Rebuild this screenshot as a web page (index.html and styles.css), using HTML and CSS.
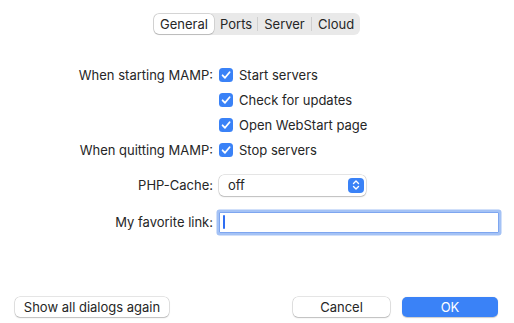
FILE: index.html
```html
<!DOCTYPE html>
<html>
<head>
<meta charset="utf-8">
<link rel="stylesheet" href="styles.css">
</head>
<body>
<div class="window">
  <div class="tabs-wrap">
    <div class="tabs">
      <div class="tab active">General</div>
      <div class="tab">Ports</div>
      <div class="sep"></div>
      <div class="tab">Server</div>
      <div class="sep"></div>
      <div class="tab">Cloud</div>
    </div>
  </div>

  <div class="form">
    <div class="label">When starting MAMP:</div>
    <div class="check"><span class="box"><svg viewBox="0 0 14 14" width="14" height="14"><path d="M3.6 7.3 L6 9.8 L10.6 4.2" fill="none" stroke="#fff" stroke-width="1.8" stroke-linecap="round" stroke-linejoin="round"/></svg></span>Start servers</div>
    <div class="label"></div>
    <div class="check"><span class="box"><svg viewBox="0 0 14 14" width="14" height="14"><path d="M3.6 7.3 L6 9.8 L10.6 4.2" fill="none" stroke="#fff" stroke-width="1.8" stroke-linecap="round" stroke-linejoin="round"/></svg></span>Check for updates</div>
    <div class="label"></div>
    <div class="check"><span class="box"><svg viewBox="0 0 14 14" width="14" height="14"><path d="M3.6 7.3 L6 9.8 L10.6 4.2" fill="none" stroke="#fff" stroke-width="1.8" stroke-linecap="round" stroke-linejoin="round"/></svg></span>Open WebStart page</div>
    <div class="label">When quitting MAMP:</div>
    <div class="check"><span class="box"><svg viewBox="0 0 14 14" width="14" height="14"><path d="M3.6 7.3 L6 9.8 L10.6 4.2" fill="none" stroke="#fff" stroke-width="1.8" stroke-linecap="round" stroke-linejoin="round"/></svg></span>Stop servers</div>

    <div class="label">PHP-Cache:</div>
    <div class="cell">
      <div class="popup">
        <span class="popup-text">off</span>
        <span class="stepper"><svg viewBox="0 0 16 14" width="16" height="14"><path d="M5.5 5.5 L8 3 L10.5 5.5 M5.5 8.5 L8 11 L10.5 8.5" fill="none" stroke="#fff" stroke-width="1.4" stroke-linecap="round" stroke-linejoin="round"/></svg></span>
      </div>
    </div>

    <div class="label">My favorite link:</div>
    <div class="cell">
      <div class="field"><span class="caret"></span></div>
    </div>
  </div>

  <div class="buttons">
    <div class="btn wide">Show all dialogs again</div>
    <div class="spacer"></div>
    <div class="btn cancel">Cancel</div>
    <div class="btn ok">OK</div>
  </div>
</div>
</body>
</html>
```
FILE: styles.css
```css
* { box-sizing: border-box; }
html, body { margin: 0; padding: 0; background: #fff; }
body {
  font-family: Inter, "Liberation Sans", sans-serif;
  font-size: 13px;
  color: #262626;
  width: 514px;
  height: 323px;
  overflow: hidden;
}
.window {
  display: flex;
  flex-direction: column;
  height: 323px;
}
.tabs-wrap {
  display: flex;
  justify-content: flex-start;
  padding: 13px 0 0 153px;
}
.tabs {
  display: flex;
  align-items: center;
  height: 22px;
  background: #e9e9e9;
  border-radius: 6px;
  padding: 1px;
}
.tab {
  height: 20px;
  line-height: 20px;
  padding: 0 6px;
  text-align: center;
  color: #262626;
}
.tab.active {
  background: #fff;
  border-radius: 5px;
  box-shadow: 0 0 0 0.5px rgba(0,0,0,0.18), 0 1px 1px rgba(0,0,0,0.12);
  width: 60px;
}
.tab:nth-child(2) { width: 43px; }
.tab:nth-child(4) { width: 53px; }
.tab:nth-child(6) { width: 47px; }
.sep {
  width: 1px;
  height: 14px;
  background: #cfcfcf;
}
.form {
  display: grid;
  grid-template-columns: 213px 1fr;
  grid-template-rows: 25px 25px 25px 25px 46px 28px;
  column-gap: 6px;
  margin-top: 27px;
  padding-right: 15px;
}
.label {
  display: flex;
  align-items: center;
  justify-content: flex-end;
  white-space: nowrap;
}
.check {
  display: flex;
  align-items: center;
  gap: 6px;
}
.box {
  width: 14px;
  height: 14px;
  border-radius: 3.5px;
  background: #3a82f7;
  display: flex;
}
.cell { display: flex; align-items: center; }
.popup {
  width: 147px;
  height: 21px;
  border-radius: 5px;
  background: #fff;
  box-shadow: 0 0 0 0.5px rgba(0,0,0,0.2), 0 1px 1.5px rgba(0,0,0,0.18);
  display: flex;
  align-items: center;
  justify-content: space-between;
  padding: 0 2px 0 9px;
}
.stepper {
  width: 16px;
  height: 15px;
  border-radius: 4px;
  background: #3a82f7;
  display: flex;
  align-items: center;
  justify-content: center;
}
.field {
  width: 280px;
  height: 21px;
  background: #fff;
  border: 1px solid #7ea6f0;
  box-shadow: 0 0 0 2.5px #a4c2f5;
  border-radius: 1px;
  display: flex;
  align-items: center;
  padding-left: 3px;
}
.caret {
  width: 2px;
  height: 14px;
  background: #2f6ef2;
  border-radius: 1px;
}
.buttons {
  margin-top: auto;
  display: flex;
  align-items: center;
  padding: 0 16px 6px 15px;
}
.btn {
  height: 20px;
  line-height: 20px;
  text-align: center;
  border-radius: 5px;
  background: #fff;
  box-shadow: 0 0 0 0.5px rgba(0,0,0,0.2), 0 1px 1.5px rgba(0,0,0,0.18);
}
.wide { width: 154px; }
.spacer { flex: 1; }
.cancel { width: 97px; }
.ok {
  width: 96px;
  margin-left: 12px;
  background: #3a82f7;
  color: #fff;
  box-shadow: 0 0.5px 1px rgba(0,0,0,0.2);
}
```
